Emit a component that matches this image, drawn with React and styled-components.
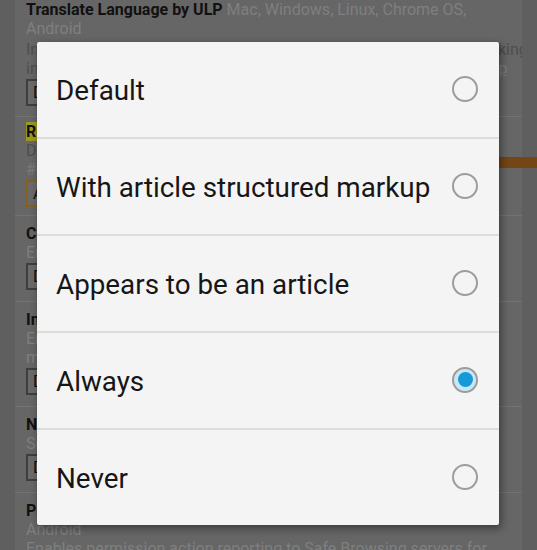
import React from 'react'
import styled, { createGlobalStyle } from 'styled-components'

const GlobalStyle = createGlobalStyle`
  html, body {
    margin: 0;
    padding: 0;
    background: #5f5f5f;
  }
  body {
    font-family: Roboto, "Noto Sans", Arial, sans-serif;
  }
`

const Screen = styled.div`
  position: relative;
  width: 537px;
  height: 550px;
  overflow: hidden;
  background: #5f5f5f;
`

const FlagList = styled.div`
  margin-left: 15px;
  width: 507px;
  background: #666;
  font-size: 16px;
  line-height: 19px;
`

const Experiment = styled.div`
  padding: ${p => (p.$first ? '0 0 10px' : p.$compact ? '5px 0 8px' : '8px 0 11px')} 11px;
  padding-right: 0;
  border-bottom: 1px solid #737373;
  white-space: nowrap;
  overflow: hidden;
`

const Title = styled.span`
  font-weight: 700;
  color: #111;
`

const Match = styled.span`
  background: #9b9a1c;
`

const Platforms = styled.span`
  color: #7f7f7f;
`

const Description = styled.div`
  color: #4e4e4e;
  margin-top: ${p => (p.$gap ? '2px' : '0')};
`

const Anchor = styled.span`
  color: #7b7b7b;
  text-decoration: ${p => (p.$link ? 'underline' : 'none')};
`

const Select = styled.div`
  margin-top: 1px;
  width: 150px;
  height: 27px;
  box-sizing: border-box;
  border: 2px solid ${p => (p.$changed ? '#86601c' : '#3e3e3e')};
  background: #6a6a6a;
  color: #111;
  padding: 2px 5px;
  line-height: 19px;
`

const RestartBar = styled.div`
  margin: -59px -15px 48px 482px;
  height: 11px;
  background: #744515;
`

const Overlay = styled.div`
  position: absolute;
  inset: 0;
`

const Dialog = styled.div`
  position: absolute;
  left: 37px;
  top: 42px;
  width: 462px;
  background: #f4f4f4;
  border-radius: 2px;
  box-shadow: 2px 3px 8px rgba(0, 0, 0, 0.45);
  display: flex;
  flex-direction: column;
`

const Option = styled.div`
  display: flex;
  align-items: center;
  justify-content: space-between;
  padding: 0 21px 2px 19px;
  box-sizing: border-box;
  height: ${p => (p.$first ? '95px' : '97px')};
  border-top: ${p => (p.$first ? 'none' : '2px solid #dcdcdc')};
  font-size: 27.8px;
  color: #161616;
`

const Label = styled.span`
  padding-top: 3px;
`

const Radio = styled.span`
  width: 26px;
  height: 26px;
  box-sizing: border-box;
  border-radius: 50%;
  border: 2px solid #9c9c9c;
  display: flex;
  align-items: center;
  justify-content: center;
  background: ${p => (p.$checked ? '#c9e8f5' : 'transparent')};

  &::after {
    content: '';
    display: ${p => (p.$checked ? 'block' : 'none')};
    width: 15px;
    height: 15px;
    border-radius: 50%;
    background: #159ad7;
  }
`

const options = [
  'Default',
  'With article structured markup',
  'Appears to be an article',
  'Always',
  'Never',
]

const App = () => {
  return (
    <Screen>
      <GlobalStyle />
      <FlagList>
        <Experiment $first>
          <Title>Translate Language by ULP</Title>{' '}
          <Platforms>Mac, Windows, Linux, Chrome OS,</Platforms>
          <br />
          <Platforms>Android</Platforms>
          <Description $gap>
            Integrate ULP language preferences into the Translate decision making
            <br />
            in order to offer the user's preferred languages first. – <Anchor $link>#translate-ulp</Anchor>
          </Description>
          <Select>Default</Select>
        </Experiment>
        <Experiment $compact>
          <Title>
            <Match>Reader</Match> Mode triggering
          </Title>{' '}
          <Platforms>Android</Platforms>
          <Description>Determines what pages the Reader Mode infobar is shown on.</Description>
          <Anchor>#reader-mode-heuristics</Anchor>
          <Select $changed>Always</Select>
        </Experiment>
        <RestartBar />
        <Experiment>
          <Title>Chrome Duet</Title> <Platforms>Android</Platforms>
          <Description>
            <Platforms>Enables Chrome Duet, split toolbar Chrome Home, on Android.</Platforms>
          </Description>
          <Select>Default</Select>
        </Experiment>
        <Experiment>
          <Title>Intervention Reports</Title> <Platforms>Android</Platforms>
          <Description>
            <Platforms>Enables interventions to be reported to the Reporting API</Platforms>
            <br />
            <Platforms>mechanism. – #enable-intervention-reports</Platforms>
          </Description>
          <Select>Default</Select>
        </Experiment>
        <Experiment>
          <Title>New tab page button position</Title> <Platforms>Android</Platforms>
          <Description>
            <Platforms>Sets the position of the new tab page button. – #ntp-button</Platforms>
          </Description>
          <Select>Default</Select>
        </Experiment>
        <Experiment>
          <Title>Permission Action Reporting</Title>
          <br />
          <Platforms>Android</Platforms>
          <Description>
            <Platforms>Enables permission action reporting to Safe Browsing servers for</Platforms>
          </Description>
        </Experiment>
      </FlagList>
      <Overlay>
        <Dialog>
          {options.map((label, i) => (
            <Option key={label} $first={i === 0}>
              <Label>{label}</Label>
              <Radio $checked={label === 'Always'} />
            </Option>
          ))}
        </Dialog>
      </Overlay>
    </Screen>
  )
}

export default App
